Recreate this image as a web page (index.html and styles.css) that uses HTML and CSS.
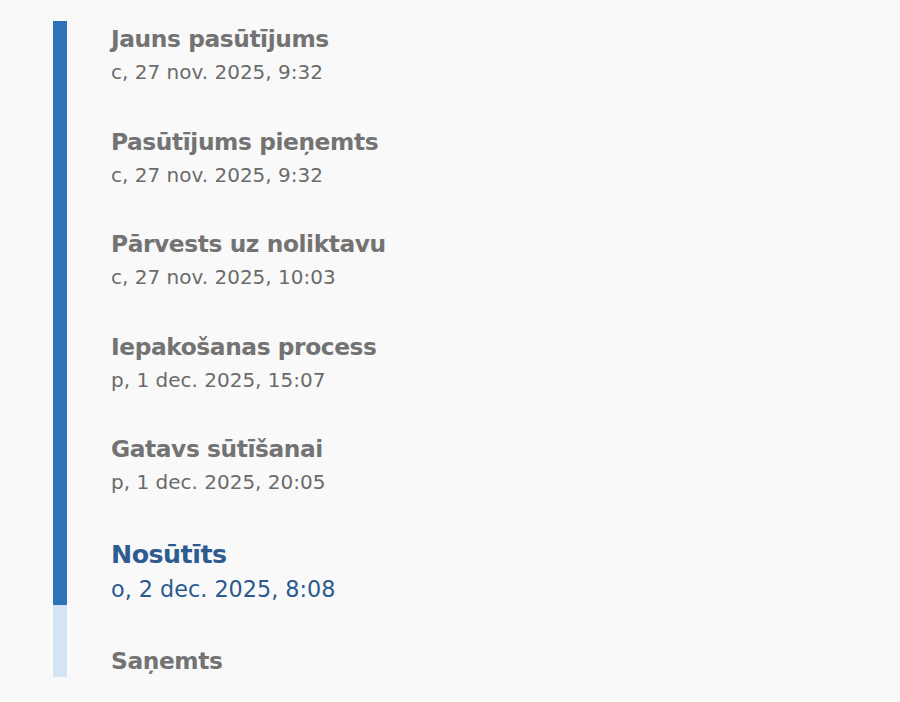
FILE: index.html
```html
<!DOCTYPE html>
<html lang="lv">
<head>
<meta charset="utf-8">
<title>Pasūtījuma statuss</title>
<link rel="stylesheet" href="styles.css">
</head>
<body>
<div class="timeline">
  <div class="track">
    <div class="track-done" style="height:584px"></div>
    <div class="track-todo"></div>
  </div>
  <ol class="steps">
    <li class="step">
      <div class="step-title">Jauns pasūtījums</div>
      <div class="step-date">c, 27 nov. 2025, 9:32</div>
    </li>
    <li class="step">
      <div class="step-title">Pasūtījums pieņemts</div>
      <div class="step-date">c, 27 nov. 2025, 9:32</div>
    </li>
    <li class="step">
      <div class="step-title">Pārvests uz noliktavu</div>
      <div class="step-date">c, 27 nov. 2025, 10:03</div>
    </li>
    <li class="step">
      <div class="step-title">Iepakošanas process</div>
      <div class="step-date">p, 1 dec. 2025, 15:07</div>
    </li>
    <li class="step">
      <div class="step-title">Gatavs sūtīšanai</div>
      <div class="step-date">p, 1 dec. 2025, 20:05</div>
    </li>
    <li class="step step-active">
      <div class="step-title">Nosūtīts</div>
      <div class="step-date">o, 2 dec. 2025, 8:08</div>
    </li>
    <li class="step">
      <div class="step-title">Saņemts</div>
    </li>
  </ol>
</div>
</body>
</html>
```
FILE: styles.css
```css
html, body {
  margin: 0;
  padding: 0;
  background: #f9f9f9;
}
body {
  font-family: "DejaVu Sans", "Noto Sans", sans-serif;
  color: #6b6b6b;
}
.timeline {
  display: flex;
  gap: 44px;
  margin: 21px 0 0 53px;
}
.track {
  width: 14px;
  display: flex;
  flex-direction: column;
}
.track-done {
  background: #2e72b9;
  flex: 0 0 auto;
}
.track-todo {
  background: #d4e4f5;
  flex: 1 1 auto;
}
.steps {
  list-style: none;
  margin: 0;
  padding: 2px 0 0 0;
  display: flex;
  flex-direction: column;
  gap: 36.5px;
}
.step-title {
  font-size: 23.3px;
  font-weight: 700;
  line-height: 32px;
  letter-spacing: -0.4px;
  color: #737373;
}
.step-date {
  font-size: 20px;
  font-weight: 400;
  line-height: 34px;
}
.step-active {
  color: #2b5a8e;
  margin-bottom: 4px;
}
.step-active .step-title {
  font-size: 25.3px;
  line-height: 37px;
  letter-spacing: -0.5px;
  color: #2e5c90;
}
.step-active .step-date {
  font-size: 22.3px;
  line-height: 32px;
}
```
